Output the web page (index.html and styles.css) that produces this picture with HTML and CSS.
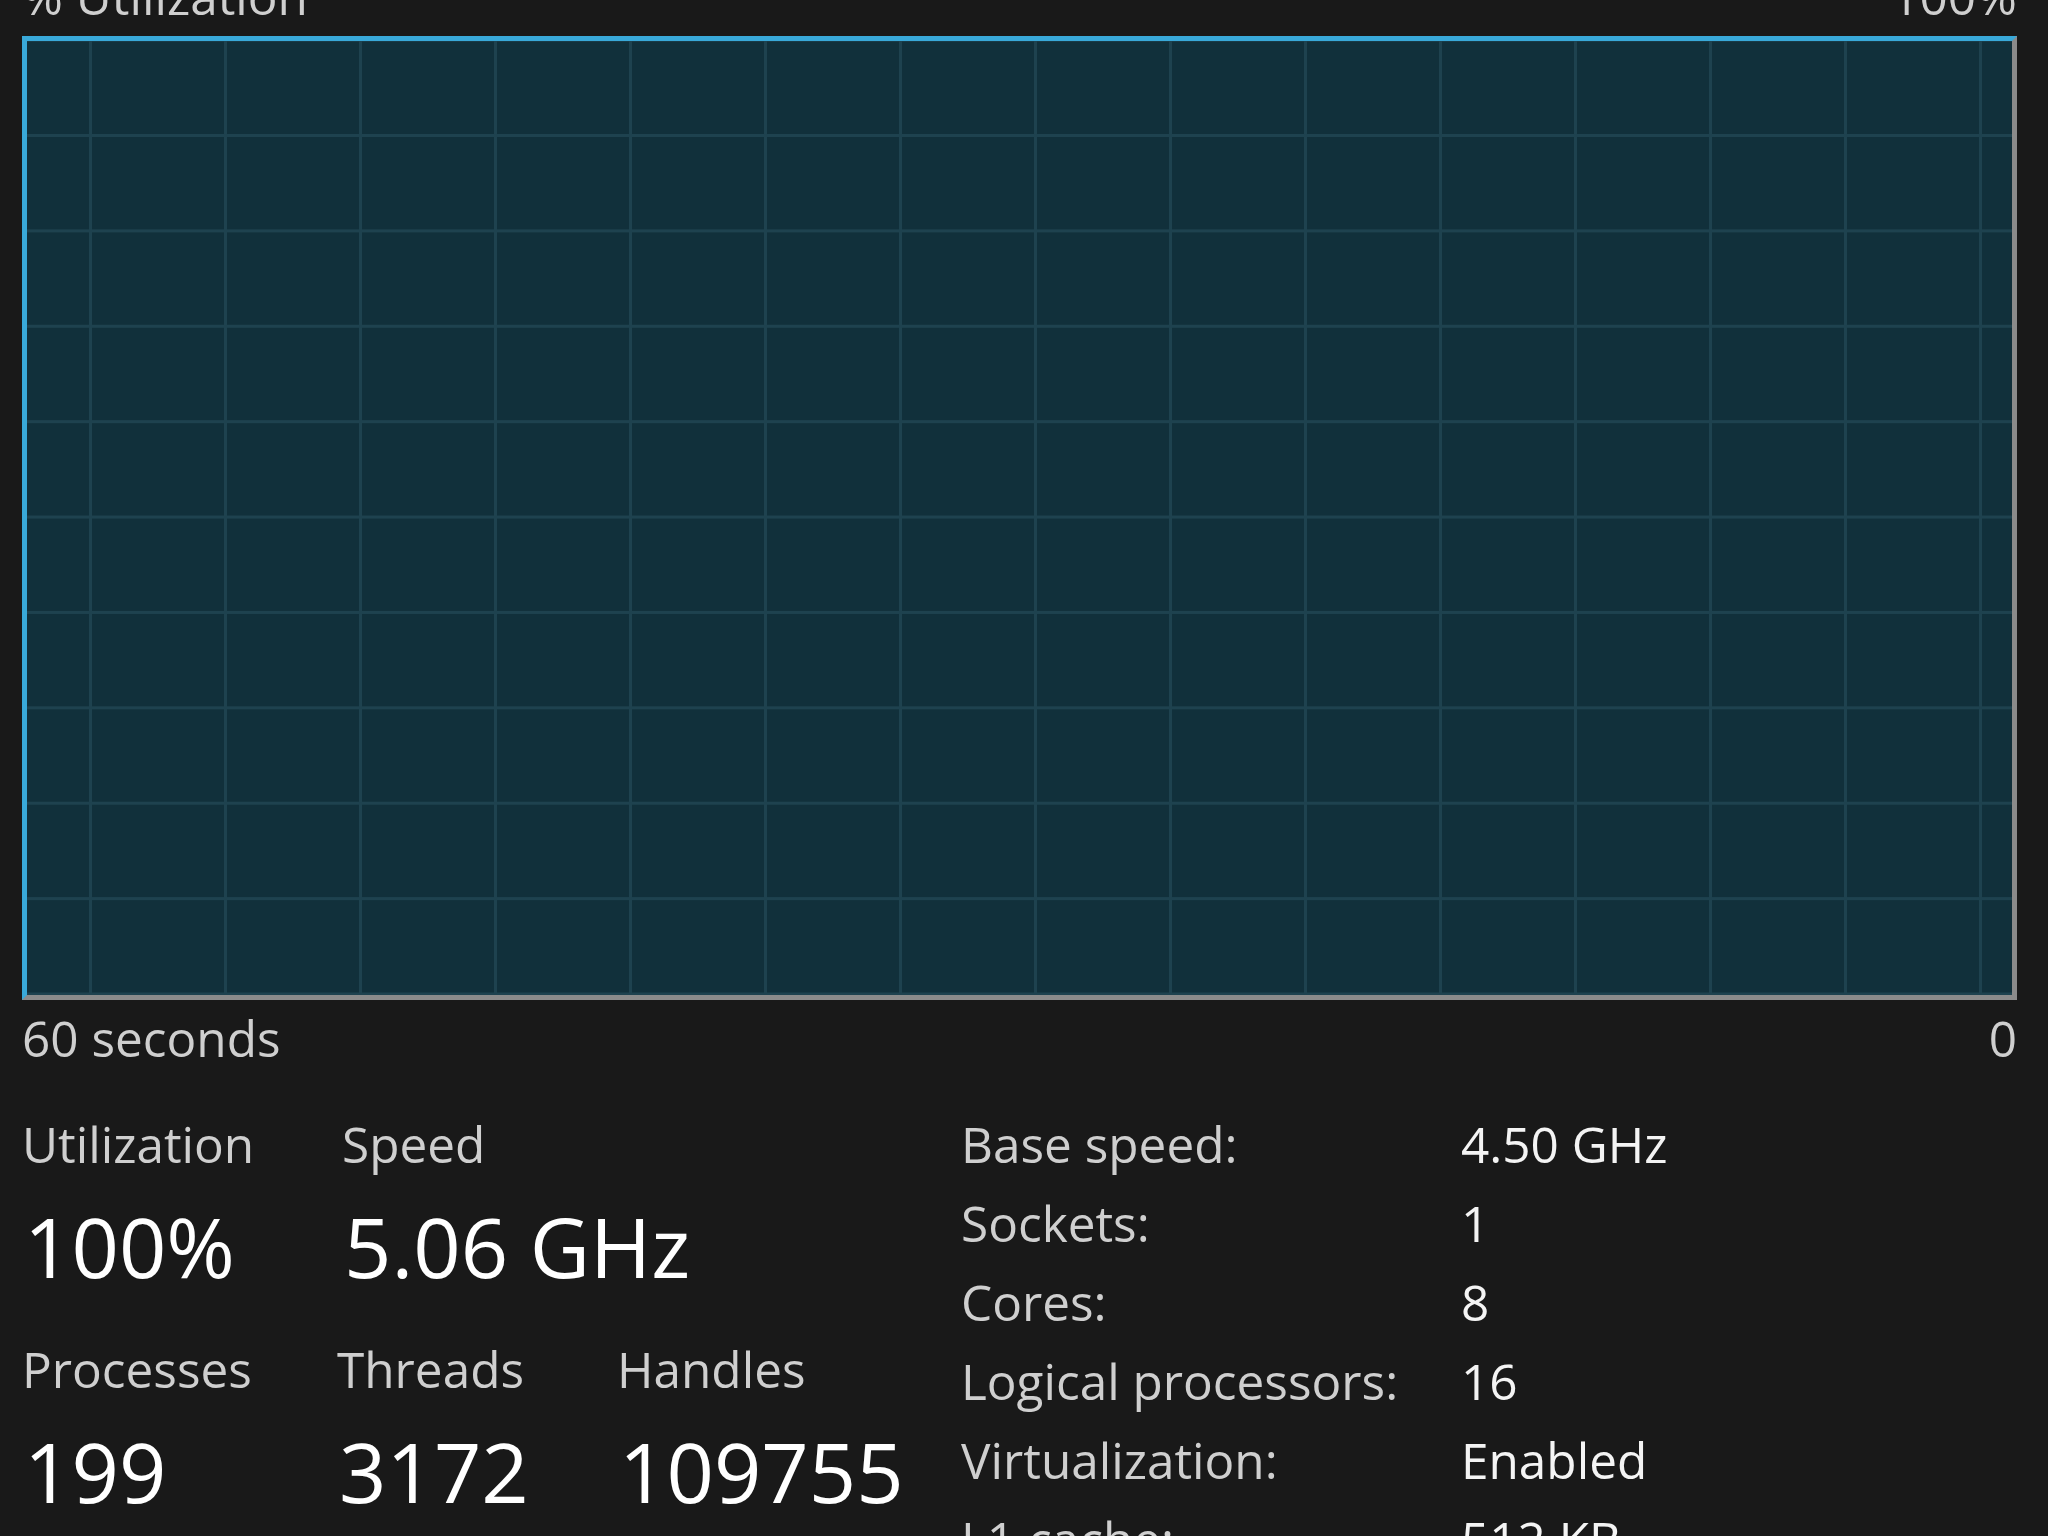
FILE: index.html
```html
<!DOCTYPE html>
<html lang="en">
<head>
    <meta charset="UTF-8">
    <meta name="viewport" content="width=device-width, initial-scale=1.0">
    <title>CPU Performance</title>
    <link rel="stylesheet" href="styles.css">
</head>
<body>
    <div class="panel">
        <div class="graph-head">
            <span>% Utilization</span>
            <span>100%</span>
        </div>
        <div class="graph"></div>
        <div class="graph-foot">
            <span>60 seconds</span>
            <span>0</span>
        </div>

        <div class="stats">
            <div class="stats-main">
                <div class="stat-row">
                    <div class="stat stat-util">
                        <div class="stat-label">Utilization</div>
                        <div class="stat-value">100%</div>
                    </div>
                    <div class="stat">
                        <div class="stat-label">Speed</div>
                        <div class="stat-value">5.06 GHz</div>
                    </div>
                </div>
                <div class="stat-row">
                    <div class="stat stat-proc">
                        <div class="stat-label">Processes</div>
                        <div class="stat-value">199</div>
                    </div>
                    <div class="stat stat-threads">
                        <div class="stat-label">Threads</div>
                        <div class="stat-value">3172</div>
                    </div>
                    <div class="stat">
                        <div class="stat-label">Handles</div>
                        <div class="stat-value">109755</div>
                    </div>
                </div>
            </div>

            <div class="specs">
                <div class="spec-name">Base speed:</div><div class="spec-value">4.50 GHz</div>
                <div class="spec-name">Sockets:</div><div class="spec-value">1</div>
                <div class="spec-name">Cores:</div><div class="spec-value">8</div>
                <div class="spec-name">Logical processors:</div><div class="spec-value">16</div>
                <div class="spec-name">Virtualization:</div><div class="spec-value">Enabled</div>
                <div class="spec-name">L1 cache:</div><div class="spec-value">512 KB</div>
            </div>
        </div>
    </div>
</body>
</html>
```

FILE: styles.css
```css
html, body {
	height: 100%;
	overflow: hidden;
}

body {
	margin: 0;
	background-color: #191919;
	font-family: "Open Sans", "Noto Sans", sans-serif;
	color: #cfcfcf;
}

.panel {
	display: flow-root;
	padding: 0 31px 0 22px;
}

.graph-head, .graph-foot {
	display: flex;
	justify-content: space-between;
	font-size: 49.5px;
	line-height: 60px;
}

.graph-head {
	margin-top: -34px;
	margin-bottom: 10px;
}

.graph-foot {
	margin-top: 8px;
}

/* grid: vertical lines every 135px, horizontal lines at every 10% */
.graph {
	height: 954px;
	border-top: 5px solid #39a9d9;
	border-left: 5px solid #39a9d9;
	border-right: 5px solid #8b8b8b;
	border-bottom: 5px solid #8b8b8b;
	background-color: #11303b;
	background-image:
		linear-gradient(to right, #1e424f 3px, transparent 3px),
		linear-gradient(to bottom, #1e424f 3px, transparent 3px);
	background-size: 135px 100%, 100% 10%;
	background-position: 62px 0, 0 93px;
}

.stats {
	display: flex;
	align-items: flex-start;
	margin-top: 37px;
}

.stats-main {
	width: 939px;
	padding-top: 9px;
}

.stat-row {
	display: flex;
}

.stat-row + .stat-row {
	margin-top: 43px;
}

.stat-util {
	width: 320px;
}

.stat-proc {
	width: 315px;
}

.stat-threads {
	width: 280px;
}

.stat-label {
	font-size: 49.5px;
	line-height: 60px;
}

.stat-value {
	margin-top: 22px;
	padding-left: 2px;
	font-size: 83px;
	line-height: 100px;
	color: #ffffff;
}

.specs {
	display: grid;
	grid-template-columns: 500px auto;
	font-size: 49.5px;
	line-height: 79px;
}

.spec-value {
	color: #f4f4f4;
}
```
